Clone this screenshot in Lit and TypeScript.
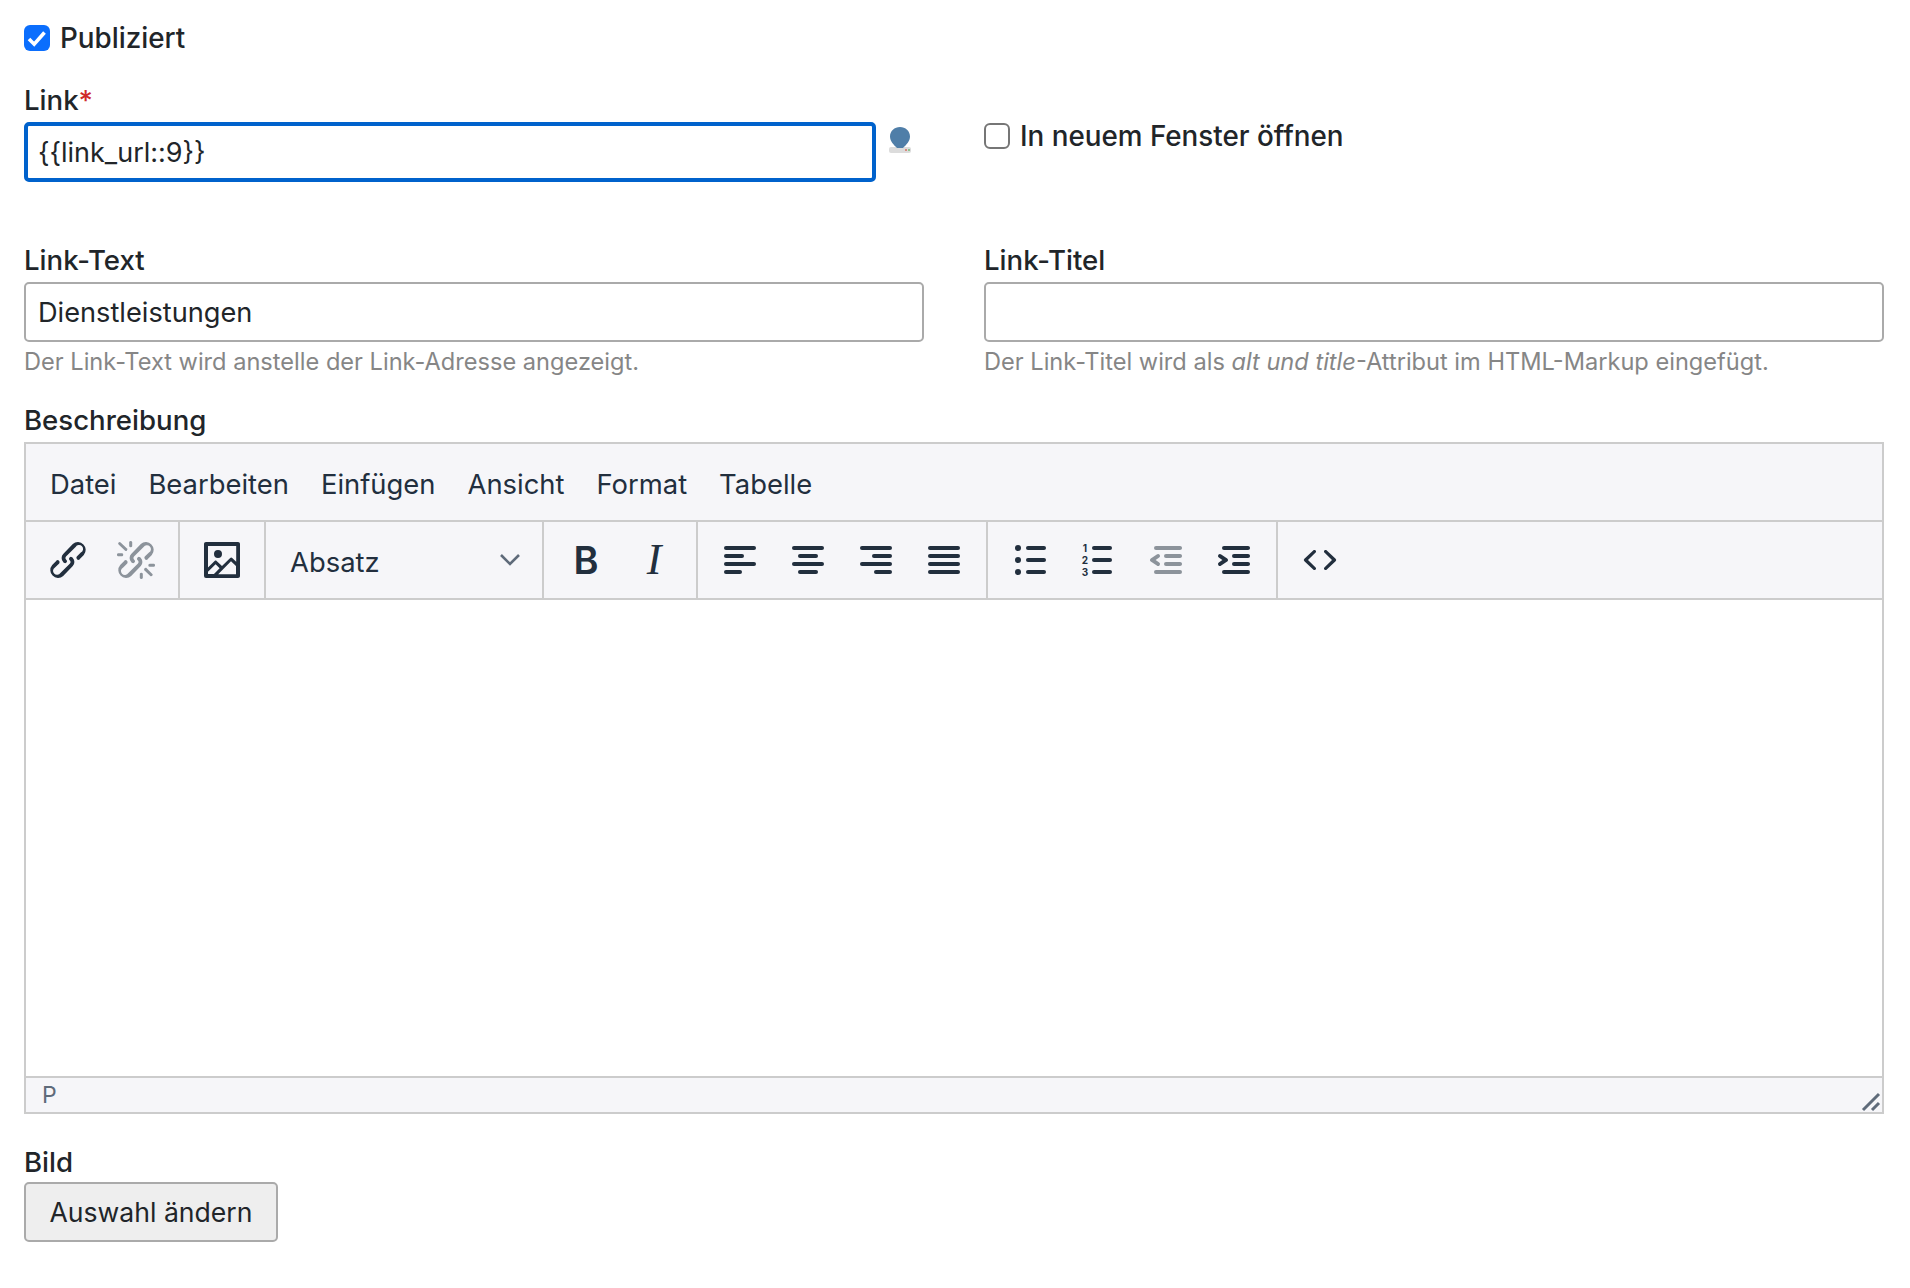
import { LitElement, html, css, svg } from 'lit';
import { customElement } from 'lit/decorators.js';

// tinymce oxide style icons, 24x24 box, drawn at 48px
const bar = (x: number, y: number, w: number) =>
  svg`<rect x=${x} y=${y} width=${w} height="2" rx="1"></rect>`;

const icons: Record<string, unknown> = {
  link: svg`<path d="M6.2 12.3a1 1 0 011.4 1.4l-2.1 2a2 2 0 102.7 2.8l4.8-4.8a1 1 0 000-1.4 1 1 0 111.4-1.3 2.9 2.9 0 010 4L9.6 20a3.9 3.9 0 01-5.5-5.5l2-2zm11.6-.6a1 1 0 01-1.4-1.4l2-2a2 2 0 10-2.6-2.8L11 10.3a1 1 0 000 1.4A1 1 0 119.6 13a2.9 2.9 0 010-4L14.4 4a3.9 3.9 0 015.5 5.5l-2 2z"></path>`,
  unlink: svg`<path d="M6.2 12.3a1 1 0 011.4 1.4l-2 2a2 2 0 102.6 2.8l4.8-4.8a1 1 0 000-1.4 1 1 0 111.4-1.3 2.9 2.9 0 010 4L9.6 20a3.9 3.9 0 01-5.5-5.5l2-2zm11.6-.6a1 1 0 01-1.4-1.4l2.1-2a2 2 0 10-2.7-2.8L11 10.3a1 1 0 000 1.4A1 1 0 119.6 13a2.9 2.9 0 010-4L14.4 4a3.9 3.9 0 015.5 5.5l-2 2zM7.6 6.3a.8.8 0 01-1 1.1L3.3 4.2a.7.7 0 111-1l3.2 3.1zM5.1 8.6a.8.8 0 010 1.5H3a.8.8 0 010-1.5H5zm5-3.5a.8.8 0 01-1.5 0V3a.8.8 0 011.5 0v2zm6 11.8a.8.8 0 011-1l3.2 3.2a.8.8 0 01-1 1L16 17zm-2.2 2a.8.8 0 011.5 0V21a.8.8 0 01-1.5 0V19zm5-3.5a.7.7 0 110-1.5H21a.8.8 0 010 1.5h-2z"></path>`,
  image: svg`<path fill-rule="nonzero" d="M5 15.7l3.3-3.2c.3-.3.7-.3 1 0L12 15l4.1-4c.3-.4.8-.4 1 0l2 1.9V5H5v10.7zM5 18V19h3l2.8-2.9-2-2L5 17.9zm14-3l-2.5-2.4-6.4 6.5H19v-4zM4 3h16c.6 0 1 .4 1 1v16c0 .6-.4 1-1 1H4a1 1 0 01-1-1V4c0-.6.4-1 1-1zm6 8a2 2 0 100-4 2 2 0 000 4z"></path>`,
  left: svg`${bar(4, 5, 16)}${bar(4, 9, 10)}${bar(4, 13, 16)}${bar(4, 17, 9)}`,
  center: svg`${bar(4, 5, 16)}${bar(7, 9, 10)}${bar(4, 13, 16)}${bar(7, 17, 10)}`,
  right: svg`${bar(4, 5, 16)}${bar(10, 9, 10)}${bar(4, 13, 16)}${bar(11, 17, 9)}`,
  justify: svg`${bar(4, 5, 16)}${bar(4, 9, 16)}${bar(4, 13, 16)}${bar(4, 17, 16)}`,
  bullets: svg`${bar(10, 5, 10)}${bar(10, 11, 10)}${bar(10, 17, 10)}<circle cx="6" cy="6" r="1.5"></circle><circle cx="6" cy="12" r="1.5"></circle><circle cx="6" cy="18" r="1.5"></circle>`,
  numbers: svg`${bar(9, 5, 10)}${bar(9, 11, 10)}${bar(9, 17, 10)}<text class="num" x="5.5" y="8">1</text><text class="num" x="5.5" y="14">2</text><text class="num" x="5.5" y="20">3</text>`,
  outdent: svg`<path d="M7 5h12c.6 0 1 .4 1 1s-.4 1-1 1H7a1 1 0 110-2zm5 4h7c.6 0 1 .4 1 1s-.4 1-1 1h-7a1 1 0 010-2zm0 4h7c.6 0 1 .4 1 1s-.4 1-1 1h-7a1 1 0 010-2zm-5 4h12a1 1 0 010 2H7a1 1 0 010-2zm1.6-3.8a1 1 0 01-1.2 1.6l-3-2a1 1 0 010-1.6l3-2a1 1 0 011.2 1.6L6.8 12l1.8 1.2z"></path>`,
  indent: svg`<path d="M7 5h12c.6 0 1 .4 1 1s-.4 1-1 1H7a1 1 0 110-2zm5 4h7c.6 0 1 .4 1 1s-.4 1-1 1h-7a1 1 0 010-2zm0 4h7c.6 0 1 .4 1 1s-.4 1-1 1h-7a1 1 0 010-2zm-5 4h12a1 1 0 010 2H7a1 1 0 010-2zm-2.6-3.8L6.2 12l-1.8-1.2a1 1 0 011.2-1.6l3 2a1 1 0 010 1.6l-3 2a1 1 0 11-1.2-1.6z"></path>`,
  code: svg`<path d="M9.8 15.7c.3.3.3.8 0 1-.3.4-.9.4-1.2 0l-4.4-4.1a.8.8 0 010-1.2l4.4-4.2c.3-.3.9-.3 1.2 0 .3.3.3.8 0 1.1L6 12l3.8 3.7zm4.4 0c-.3.3-.3.8 0 1 .3.4.9.4 1.2 0l4.4-4.1a.8.8 0 000-1.2l-4.4-4.2c-.3-.3-.9-.3-1.2 0-.3.3-.3.8 0 1.1L18 12l-3.8 3.7z"></path>`,
};

const menus = ['Datei', 'Bearbeiten', 'Einfügen', 'Ansicht', 'Format', 'Tabelle'];

@customElement('app-root')
export class AppRoot extends LitElement {
  static styles = css`
    :host {
      display: block;
      height: 1288px;
      box-sizing: border-box;
      padding: 20px 26px 0 24px;
      background: #fff;
      color: #212529;
      font-family: Inter, 'Liberation Sans', sans-serif;
      font-size: 27.4px;
    }

    * {
      box-sizing: border-box;
    }

    .check-row {
      display: flex;
      align-items: center;
      gap: 10px;
      height: 36px;
      font-weight: 500;
      font-size: 27.8px;
    }

    .box {
      width: 26px;
      height: 26px;
      flex: none;
      border-radius: 6px;
      border: 2px solid #767676;
      background: #fff;
    }

    .box.on {
      background: #0b6efd;
      border: 0;
    }

    .box svg {
      display: block;
      width: 26px;
      height: 26px;
    }

    .label {
      display: block;
      height: 32px;
      line-height: 32px;
      margin-bottom: 6px;
      font-weight: 500;
      font-size: 27.6px;
    }

    .label b {
      color: #cf2a27;
      font-weight: 500;
    }

    .link-field {
      margin-top: 28px;
      display: grid;
      grid-template-columns: 1fr 1fr;
      column-gap: 60px;
    }

    .link-left {
      height: 98px;
    }

    .link-input {
      display: flex;
      align-items: flex-start;
      gap: 12px;
    }

    input[type='text'].focused {
      width: 852px;
      border: 4px solid #0062cc;
      padding: 0 10px;
      font-size: 27px;
    }

    .marker {
      width: 24px;
      height: 28px;
      flex: none;
      margin-top: 5px;
    }

    .link-right {
      padding-top: 34px;
    }

    input[type='text'] {
      display: block;
      width: 100%;
      height: 60px;
      border: 2px solid #aaa;
      border-radius: 5px;
      padding: 0 12px;
      outline: 0;
      background: #fff;
      color: #212529;
      font: inherit;
      font-size: 27.2px;
    }

    .pair {
      margin-top: 62px;
      display: grid;
      grid-template-columns: 1fr 1fr;
      column-gap: 60px;
    }

    .help {
      margin-top: 5px;
      height: 31px;
      line-height: 30px;
      color: #868686;
      font-size: 23.6px;
    }

    .help-block {
      margin-top: 26px;
    }

    .editor-label {
      margin-bottom: 6px;
    }

    .editor {
      display: flex;
      flex-direction: column;
      height: 672px;
      border: 2px solid #ccc;
      background: #fff;
      color: #222f3e;
    }

    .menubar {
      display: flex;
      align-items: center;
      gap: 32px;
      height: 76px;
      padding: 4px 0 0 24px;
      background: #f6f6f9;
    }

    .toolbar {
      display: flex;
      height: 80px;
      border-top: 2px solid #ccc;
      border-bottom: 2px solid #ccc;
      background: #f6f6f9;
    }

    .group {
      display: flex;
      padding: 0 8px;
      border-right: 2px solid #ccc;
    }

    .group:last-child {
      border-right: 0;
    }

    .btn {
      display: flex;
      align-items: center;
      justify-content: center;
      width: 68px;
      height: 76px;
      fill: #222f3e;
    }

    .btn.off {
      fill: rgba(34, 47, 62, 0.5);
    }

    .btn svg {
      width: 48px;
      height: 48px;
      margin-top: -1px;
    }

    .num {
      font-family: Inter, sans-serif;
      font-size: 5px;
      font-weight: 700;
      text-anchor: middle;
    }

    .bold {
      font-weight: 600;
      font-size: 38px;
      line-height: 1;
    }

    .italic {
      font-family: 'Liberation Serif', serif;
      font-style: italic;
      font-size: 44px;
      line-height: 1;
    }

    .format {
      display: flex;
      align-items: center;
      justify-content: space-between;
      width: 278px;
      padding: 3px 20px 0 24px;
      border-right: 2px solid #ccc;
    }

    .format svg {
      width: 24px;
      height: 14px;
      margin-top: -3px;
    }

    .area {
      flex: 1;
    }

    .status {
      display: flex;
      align-items: center;
      justify-content: space-between;
      height: 36px;
      padding: 0 1px 0 16px;
      border-top: 2px solid #ccc;
      background: #f6f6f9;
      color: #5f6b7a;
      font-size: 23px;
    }

    .status svg {
      display: block;
      width: 20px;
      height: 20px;
      margin-top: 13px;
    }

    .picture {
      margin-top: 32px;
    }

    .picture .label {
      margin-bottom: 4px;
    }

    .pick {
      display: block;
      height: 60px;
      width: 254px;
      padding: 0;
      border: 2px solid #aaa;
      border-radius: 5px;
      background: #eee;
      color: #212529;
      font: inherit;
      font-size: 26.6px;
    }
  `;

  private tool(name: string, off = false) {
    return html`<span class="btn ${off ? 'off' : ''}"><svg viewBox="0 0 24 24">${icons[name]}</svg></span>`;
  }

  render() {
    return html`
      <div class="check-row">
        <span class="box on">
          <svg viewBox="0 0 26 26"><path d="M5 14l5.2 5.2L20.5 7.5" fill="none" stroke="#fff" stroke-width="3.6"></path></svg>
        </span>
        Publiziert
      </div>

      <div class="link-field">
        <div class="link-left">
          <label class="label">Link<b>*</b></label>
          <div class="link-input">
            <input class="focused" type="text" .value=${'{{link_url::9}}'} />
            <svg class="marker" viewBox="0 0 24 28">
              <rect x="1" y="20" width="22" height="6" rx="2" fill="#dcdcdc"></rect>
              <path d="M12 0c5.5 0 10 4 10 9.500 0 5-4 8.500-7 11.500h-6c-3-3-7-6.500-7-11.500C2 4 6.500 0 12 0z" fill="#4f7ea8"></path>
              <rect x="17" y="22" width="2" height="2" fill="#d98a80"></rect>
              <rect x="20" y="22" width="2" height="2" fill="#8ec48e"></rect>
            </svg>
          </div>
        </div>
        <div class="link-right">
          <div class="check-row"><span class="box"></span>In neuem Fenster öffnen</div>
        </div>
      </div>

      <div class="pair">
        <div>
          <label class="label">Link-Text</label>
          <input type="text" .value=${'Dienstleistungen'} />
          <div class="help">Der Link-Text wird anstelle der Link-Adresse angezeigt.</div>
        </div>
        <div>
          <label class="label">Link-Titel</label>
          <input type="text" />
          <div class="help">Der Link-Titel wird als <i>alt und title</i>-Attribut im HTML-Markup eingefügt.</div>
        </div>
      </div>

      <div class="help-block">
        <label class="label editor-label">Beschreibung</label>
        <div class="editor">
          <div class="menubar">${menus.map((m) => html`<span>${m}</span>`)}</div>
          <div class="toolbar">
            <div class="group">${this.tool('link')}${this.tool('unlink', true)}</div>
            <div class="group">${this.tool('image')}</div>
            <div class="format">
              Absatz
              <svg viewBox="0 0 24 14"><path d="M3 2l9 9 9-9" fill="none" stroke="#5f6b7a" stroke-width="2.6"></path></svg>
            </div>
            <div class="group">
              <span class="btn"><span class="bold">B</span></span>
              <span class="btn"><span class="italic">I</span></span>
            </div>
            <div class="group">${this.tool('left')}${this.tool('center')}${this.tool('right')}${this.tool('justify')}</div>
            <div class="group">${this.tool('bullets')}${this.tool('numbers')}${this.tool('outdent', true)}${this.tool('indent')}</div>
            <div class="group">${this.tool('code')}</div>
          </div>
          <div class="area"></div>
          <div class="status">
            <span>P</span>
            <svg viewBox="0 0 20 20"><path d="M2 18L18 2M11 18l7-7" fill="none" stroke="#5f6b7a" stroke-width="3"></path></svg>
          </div>
        </div>
      </div>

      <div class="picture">
        <label class="label">Bild</label>
        <button class="pick">Auswahl ändern</button>
      </div>
    `;
  }
}
